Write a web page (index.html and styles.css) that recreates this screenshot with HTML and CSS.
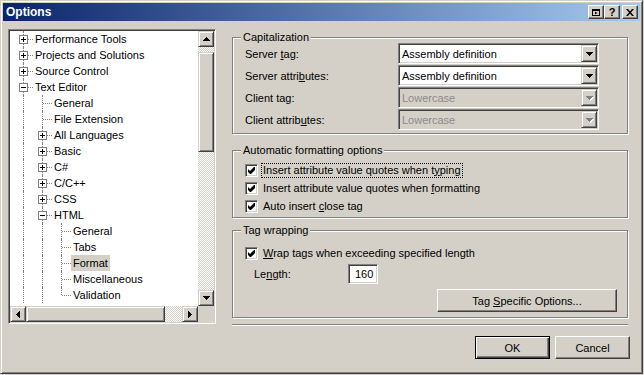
FILE: index.html
```html
<!DOCTYPE html>
<html>
<head>
    <title>Options</title>
    <link rel="stylesheet" href="styles.css">
</head>
<body>

<div class="window">
    <div class="titlebar">
        <span class="title">Options</span>
        <div class="cap-buttons">
            <span class="cap-btn">
                <svg width="8" height="7" viewBox="0 0 8 7"><path fill-rule="evenodd" d="M0 0h8v7H0z M1 2v4h6V2z"/><path d="M3 2.5l2.5 1.5-2.5 1.5z"/></svg>
            </span>
            <span class="cap-btn">?</span>
            <span class="cap-btn close">
                <svg width="8" height="7" viewBox="0 0 8 7"><path d="M0 0h2l2 2.5L6 0h2L5 3.5 8 7H6L4 4.5 2 7H0l3-3.5z"/></svg>
            </span>
        </div>
    </div>

    <div class="dialog">
        <!-- дерево настроек -->
        <div class="tree">
            <div class="tree-list">
                <div class="row"><span class="cell node"><i class="box plus"></i></span><span class="label">Performance Tools</span></div>
                <div class="row"><span class="cell node"><i class="box plus"></i></span><span class="label">Projects and Solutions</span></div>
                <div class="row"><span class="cell node"><i class="box plus"></i></span><span class="label">Source Control</span></div>
                <div class="row"><span class="cell node"><i class="box"></i></span><span class="label">Text Editor</span></div>
                <div class="row"><span class="cell guide"></span><span class="cell node"></span><span class="label">General</span></div>
                <div class="row"><span class="cell guide"></span><span class="cell node"></span><span class="label">File Extension</span></div>
                <div class="row"><span class="cell guide"></span><span class="cell node"><i class="box plus"></i></span><span class="label">All Languages</span></div>
                <div class="row"><span class="cell guide"></span><span class="cell node"><i class="box plus"></i></span><span class="label">Basic</span></div>
                <div class="row"><span class="cell guide"></span><span class="cell node"><i class="box plus"></i></span><span class="label">C#</span></div>
                <div class="row"><span class="cell guide"></span><span class="cell node"><i class="box plus"></i></span><span class="label">C/C++</span></div>
                <div class="row"><span class="cell guide"></span><span class="cell node"><i class="box plus"></i></span><span class="label">CSS</span></div>
                <div class="row"><span class="cell guide"></span><span class="cell node"><i class="box"></i></span><span class="label">HTML</span></div>
                <div class="row"><span class="cell guide"></span><span class="cell guide"></span><span class="cell node"></span><span class="label">General</span></div>
                <div class="row"><span class="cell guide"></span><span class="cell guide"></span><span class="cell node"></span><span class="label">Tabs</span></div>
                <div class="row"><span class="cell guide"></span><span class="cell guide"></span><span class="cell node"></span><span class="label selected">Format</span></div>
                <div class="row"><span class="cell guide"></span><span class="cell guide"></span><span class="cell node"></span><span class="label">Miscellaneous</span></div>
                <div class="row"><span class="cell guide"></span><span class="cell guide"></span><span class="cell node last"></span><span class="label">Validation</span></div>
            </div>
            <div class="vscroll">
                <span class="sb-btn"><svg width="7" height="4"><path d="M3 0h1v1h1v1h1v1h1v1H0V3h1V2h1V1h1z"/></svg></span>
                <span class="vthumb"></span>
                <span class="sb-btn end"><svg width="7" height="4"><path d="M0 0H7V1H6V2H5V3H4V4H3V3H2V2H1V1H0Z"/></svg></span>
            </div>
            <div class="hscroll">
                <span class="sb-btn"><svg width="4" height="7"><path d="M3 0h1v7h-1v-1h-1v-1h-1v-1h-1v-1h1v-1h1v-1h1z"/></svg></span>
                <span class="hthumb"></span>
                <span class="sb-btn end"><svg width="4" height="7"><path d="M0 0h1v1h1v1h1v1h1v1h-1v1h-1v1h-1v1h-1z"/></svg></span>
            </div>
            <div class="corner"></div>
        </div>

        <div class="pane">
            <div class="group caps">
                <span class="group-title">Capitalization</span>
                <div class="group-body">
                    <div class="field-row">
                        <span class="field-label">Server <u>t</u>ag:</span>
                        <div class="combo"><span class="combo-text">Assembly definition</span><span class="combo-btn"><svg width="7" height="4"><path d="M0 0H7V1H6V2H5V3H4V4H3V3H2V2H1V1H0Z"/></svg></span></div>
                    </div>
                    <div class="field-row">
                        <span class="field-label">Server attri<u>b</u>utes:</span>
                        <div class="combo"><span class="combo-text">Assembly definition</span><span class="combo-btn"><svg width="7" height="4"><path d="M0 0H7V1H6V2H5V3H4V4H3V3H2V2H1V1H0Z"/></svg></span></div>
                    </div>
                    <div class="field-row">
                        <span class="field-label">Client ta<u>g</u>:</span>
                        <div class="combo disabled"><span class="combo-text">Lowercase</span><span class="combo-btn"><svg width="8" height="5"><path fill="#fff" d="M1 1H8V2H7V3H6V4H5V5H4V4H3V3H2V2H1Z"/><path d="M0 0H7V1H6V2H5V3H4V4H3V3H2V2H1V1H0Z"/></svg></span></div>
                    </div>
                    <div class="field-row">
                        <span class="field-label">Client attrib<u>u</u>tes:</span>
                        <div class="combo disabled"><span class="combo-text">Lowercase</span><span class="combo-btn"><svg width="8" height="5"><path fill="#fff" d="M1 1H8V2H7V3H6V4H5V5H4V4H3V3H2V2H1Z"/><path d="M0 0H7V1H6V2H5V3H4V4H3V3H2V2H1V1H0Z"/></svg></span></div>
                    </div>
                </div>
            </div>

            <div class="group auto">
                <span class="group-title">Automatic formatting options</span>
                <div class="group-body">
                    <div class="check-row">
                        <span class="checkbox"><svg width="7" height="7"><path d="M0 2L2 4L6 0L7 0L7 3L3 7L2 7L0 5Z"/></svg></span>
                        <span class="check-label focus">Insert attribute value quotes when t<u>y</u>ping</span>
                    </div>
                    <div class="check-row">
                        <span class="checkbox"><svg width="7" height="7"><path d="M0 2L2 4L6 0L7 0L7 3L3 7L2 7L0 5Z"/></svg></span>
                        <span class="check-label">Insert attribute value quotes when <u>f</u>ormatting</span>
                    </div>
                    <div class="check-row">
                        <span class="checkbox"><svg width="7" height="7"><path d="M0 2L2 4L6 0L7 0L7 3L3 7L2 7L0 5Z"/></svg></span>
                        <span class="check-label">Auto insert <u>c</u>lose tag</span>
                    </div>
                </div>
            </div>

            <div class="group wrap">
                <span class="group-title">Tag wrapping</span>
                <div class="group-body">
                    <div class="check-row">
                        <span class="checkbox"><svg width="7" height="7"><path d="M0 2L2 4L6 0L7 0L7 3L3 7L2 7L0 5Z"/></svg></span>
                        <span class="check-label"><u>W</u>rap tags when exceeding specified length</span>
                    </div>
                    <div class="length-row">
                        <span class="length-label">Le<u>n</u>gth:</span>
                        <span class="textbox">160</span>
                    </div>
                    <div class="group-actions">
                        <span class="button wide"><span>Tag <u>S</u>pecific Options...</span></span>
                    </div>
                </div>
            </div>

            <div class="separator"></div>

            <div class="actions">
                <span class="button default">OK</span>
                <span class="button">Cancel</span>
            </div>
        </div>
    </div>
</div>

</body>
</html>
```

FILE: styles.css
```css
body {
    margin: 0;
    background-color: #d4d0c8;
    font-family: "Liberation Sans", Arial, sans-serif;
    font-size: 11px;
    color: #000;
}

.window {
    width: 643px;
    height: 374px;
    box-sizing: border-box;
    padding: 2px;
    background-color: #d4d0c8;
    border: 1px solid;
    border-color: #d4d0c8 #404040 #404040 #d4d0c8;
    box-shadow: inset 1px 1px #fff, inset -1px -1px #808080;
}

/* Заголовок окна */
.titlebar {
    height: 18px;
    display: flex;
    align-items: center;
    justify-content: space-between;
    padding: 0 2px 0 3px;
    background: linear-gradient(to right, #0a246a, #a6caf0);
}
.title {
    color: #fff;
    font-weight: bold;
    font-size: 12px;
}
.cap-buttons {
    display: flex;
}
.cap-btn {
    width: 16px;
    height: 14px;
    box-sizing: border-box;
    display: flex;
    align-items: center;
    justify-content: center;
    background-color: #d4d0c8;
    border: 1px solid;
    border-color: #fff #404040 #404040 #fff;
    box-shadow: inset -1px -1px #808080;
    font-weight: bold;
    font-size: 11px;
    line-height: 1;
}
.cap-btn.close {
    margin-left: 2px;
}

.dialog {
    display: flex;
    gap: 16px;
    padding: 8px 0 0 5px;
}

/* Дерево */
.tree {
    width: 208px;
    height: 295px;
    box-sizing: border-box;
    padding: 1px;
    background-color: #fff;
    border: 1px solid;
    border-color: #808080 #fff #fff #808080;
    box-shadow: inset 1px 1px #404040, inset -1px -1px #d4d0c8;
    display: grid;
    grid-template-columns: 1fr 16px;
    grid-template-rows: 1fr 16px;
}
.tree-list {
    overflow: hidden;
    padding-left: 4px;
}
.row {
    display: flex;
    height: 16px;
    white-space: nowrap;
}
.cell {
    position: relative;
    flex: none;
    width: 19px;
    height: 16px;
}
.cell::before {
    content: "";
    position: absolute;
    left: 9px;
    top: 0;
    bottom: 0;
    border-left: 1px dotted #808080;
}
.cell.node.last::before {
    bottom: 8px;
}
.cell.node::after {
    content: "";
    position: absolute;
    left: 10px;
    right: 0;
    top: 8px;
    border-top: 1px dotted #808080;
}
.box {
    position: absolute;
    z-index: 1;
    left: 5px;
    top: 4px;
    width: 9px;
    height: 9px;
    box-sizing: border-box;
    border: 1px solid #808080;
    background-color: #fff;
}
.box::before {
    content: "";
    position: absolute;
    left: 1px;
    top: 3px;
    width: 5px;
    height: 1px;
    background-color: #000;
}
.box.plus::after {
    content: "";
    position: absolute;
    left: 3px;
    top: 1px;
    width: 1px;
    height: 5px;
    background-color: #000;
}
.label {
    padding: 0 2px;
    line-height: 16px;
}
.label.selected {
    background-color: #d4d0c8;
}

/* Полосы прокрутки */
.vscroll,
.hscroll {
    display: flex;
    background: repeating-conic-gradient(#fff 0 25%, #d4d0c8 0 50%) 0 0 / 2px 2px;
}
.vscroll {
    flex-direction: column;
}
.sb-btn,
.vthumb,
.hthumb,
.combo-btn {
    box-sizing: border-box;
    background-color: #d4d0c8;
    border: 1px solid;
    border-color: #d4d0c8 #404040 #404040 #d4d0c8;
    box-shadow: inset 1px 1px #fff, inset -1px -1px #808080;
}
.sb-btn {
    width: 16px;
    height: 16px;
    display: flex;
    align-items: center;
    justify-content: center;
}
.sb-btn.end {
    margin: auto 0 0 auto;
}
.vthumb {
    height: 100px;
    margin-top: 5px;
}
.hthumb {
    width: 139px;
}
.corner {
    background-color: #d4d0c8;
}

/* Правая панель */
.pane {
    width: 396px;
    display: flex;
    flex-direction: column;
}
.group {
    border: 1px solid #808080;
    box-shadow: inset 1px 1px #fff, 1px 1px #fff;
}
.group-title {
    display: block;
    width: max-content;
    margin: -7px 0 -1px 8px;
    padding: 0 2px;
    line-height: 13px;
    background-color: #d4d0c8;
}
.caps {
    margin-top: 8px;
}
.caps .group-body {
    padding-bottom: 2px;
}
.auto {
    margin-top: 16px;
}
.auto .group-body {
    padding: 5px 0 2px;
}
.wrap {
    margin-top: 12px;
}
.wrap .group-body {
    padding: 8px 0 5px;
}

.field-row {
    display: flex;
    align-items: center;
    height: 21px;
    margin-bottom: 1px;
    padding-left: 12px;
}
.field-label {
    width: 153px;
}
.combo {
    width: 201px;
    height: 21px;
    box-sizing: border-box;
    padding: 1px;
    display: flex;
    align-items: center;
    background-color: #fff;
    border: 1px solid;
    border-color: #808080 #fff #fff #808080;
    box-shadow: inset 1px 1px #404040, inset -1px -1px #d4d0c8;
}
.combo-text {
    flex: 1;
    padding-left: 2px;
}
.combo-btn {
    width: 16px;
    height: 17px;
    display: flex;
    align-items: center;
    justify-content: center;
}
.combo.disabled {
    background-color: #d4d0c8;
    color: #8c8c8c;
}
.combo.disabled .combo-btn svg {
    fill: #808080;
    margin: 1px 0 0 1px;
}

.check-row {
    display: flex;
    align-items: center;
    height: 18px;
    padding-left: 12px;
}
.checkbox {
    width: 13px;
    height: 13px;
    box-sizing: border-box;
    display: flex;
    align-items: center;
    justify-content: center;
    background-color: #fff;
    border: 1px solid;
    border-color: #808080 #fff #fff #808080;
    box-shadow: inset 1px 1px #404040, inset -1px -1px #d4d0c8;
}
.check-label {
    margin-left: 3px;
    padding: 0 1px;
    line-height: 13px;
    border: 1px solid transparent;
}
.check-label.focus {
    border: 1px dotted #000;
}

.length-row {
    display: flex;
    align-items: center;
    margin-top: 2px;
    padding-left: 21px;
}
.length-label {
    width: 94px;
}
.textbox {
    width: 30px;
    height: 20px;
    box-sizing: border-box;
    padding: 0 0 0 6px;
    line-height: 18px;
    background-color: #fff;
    border: 1px solid;
    border-color: #808080 #fff #fff #808080;
    box-shadow: inset 1px 1px #404040, inset -1px -1px #d4d0c8;
}
.group-actions {
    display: flex;
    justify-content: flex-end;
    margin-top: 5px;
    padding-right: 10px;
}

/* Кнопки */
.button {
    width: 75px;
    height: 23px;
    box-sizing: border-box;
    display: flex;
    align-items: center;
    justify-content: center;
    background-color: #d4d0c8;
    border: 1px solid;
    border-color: #fff #404040 #404040 #fff;
    box-shadow: inset -1px -1px #808080;
}
.button.wide {
    width: 180px;
}
.button.default {
    border-color: #000;
    box-shadow: inset 1px 1px #fff, inset -1px -1px #404040, inset -2px -2px #808080;
}

.separator {
    margin-top: 6px;
    border-top: 1px solid #808080;
    border-bottom: 1px solid #fff;
}
.actions {
    display: flex;
    justify-content: flex-end;
    gap: 5px;
    margin: 10px -2px 0 0;
}
```
